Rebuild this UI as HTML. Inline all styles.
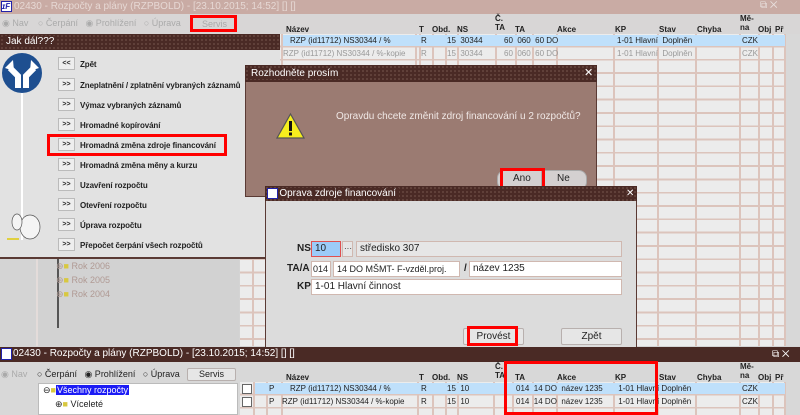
<!DOCTYPE html>
<html><head><meta charset="utf-8"><style>
*{margin:0;padding:0;box-sizing:border-box}
body{width:800px;height:415px;overflow:hidden;position:relative;background:#d4d4d4;font-family:"Liberation Sans",sans-serif;font-size:9px;color:#222}
.a{position:absolute}
.tb{background:#4a2a25;color:#fff;font-size:10px;line-height:15px;padding-left:3px;background-image:radial-gradient(#6e4e46 0.7px,transparent 1px);background-size:4px 4px;background-repeat:repeat}
.tt{background:#4a2a25;padding:0 3px}
.btn{border:1px solid #b8b0ae;background:#e6e6e6;text-align:center;border-radius:2px}
.red{border:3px solid #f00}
.inp{position:absolute;height:16px;border:1px solid #d0b8b0;background:#fff;line-height:14px;padding-left:3px;font-size:10px;white-space:nowrap;overflow:hidden}
.lbl{position:absolute;font-weight:bold;font-size:10px}
.mi{position:absolute;left:58px;width:17px;height:13px;border:1px solid #bbb;background:#eee;font-size:7px;font-weight:bold;text-align:center;line-height:11px}
.mt{position:absolute;left:80px;font-weight:bold;font-size:8px;letter-spacing:-0.1px;white-space:nowrap}
.hd{position:absolute;font-weight:bold;font-size:8px}
</style></head><body>
<div class="a" style="left:0;top:0;width:800px;height:14px;background:#c9aba4"></div>
<div class="a" style="left:1px;top:1px;width:11px;height:11px;background:#fff;border:1px solid #22a;color:#22a;font-size:8px;font-weight:bold;line-height:9px;font-style:italic">ɪF</div>
<div class="a" style="left:14px;top:1px;color:#e6d8d4;font-size:10px">02430 - Rozpočty a plány (RZPBOLD) - [23.10.2015; 14:52] [] []</div>
<div class="a" style="left:760px;top:0;color:#e9e0de;font-size:10px">⧉ ✕</div>
<div class="a" style="left:0;top:14px;width:800px;height:20px;background:#d8d6d6"></div>
<div class="a" style="left:2px;top:18px;color:#aaa;font-size:9px">◉ Nav</div>
<div class="a" style="left:38px;top:18px;color:#aaa;font-size:9px">○ Čerpání &nbsp; ◉ Prohlížení &nbsp; ○ Úprava</div>
<div class="a red" style="left:190px;top:15px;width:47px;height:17px"></div>
<div class="a" style="left:202px;top:19px;color:#aaa;font-size:9px">Servis</div>
<div class="hd" style="left:286px;top:25px">Název</div>
<div class="hd" style="left:419px;top:25px">T</div>
<div class="hd" style="left:432px;top:25px">Obd.</div>
<div class="hd" style="left:457px;top:25px">NS</div>
<div class="hd" style="left:495px;top:14px">Č.<br>TA</div>
<div class="hd" style="left:515px;top:25px">TA</div>
<div class="hd" style="left:557px;top:25px">Akce</div>
<div class="hd" style="left:615px;top:25px">KP</div>
<div class="hd" style="left:659px;top:25px">Stav</div>
<div class="hd" style="left:697px;top:25px">Chyba</div>
<div class="hd" style="left:740px;top:14px">Mě-<br>na</div>
<div class="hd" style="left:758px;top:25px">Obj</div>
<div class="hd" style="left:775px;top:25px">Př</div>
<div class="a" style="left:240px;top:34px;width:546px;height:312px;background:
repeating-linear-gradient(to bottom,transparent 0 11.5px,#dcc4bc 11.5px 13.3px),
linear-gradient(#dcc4bc,#dcc4bc) 12px 0/2px 100% no-repeat,
linear-gradient(#dcc4bc,#dcc4bc) 25px 0/2px 100% no-repeat,
linear-gradient(#dcc4bc,#dcc4bc) 41px 0/2px 100% no-repeat,
linear-gradient(#dcc4bc,#dcc4bc) 175px 0/2px 100% no-repeat,
linear-gradient(#dcc4bc,#dcc4bc) 179px 0/2px 100% no-repeat,
linear-gradient(#dcc4bc,#dcc4bc) 192px 0/2px 100% no-repeat,
linear-gradient(#dcc4bc,#dcc4bc) 205px 0/2px 100% no-repeat,
linear-gradient(#dcc4bc,#dcc4bc) 217px 0/2px 100% no-repeat,
linear-gradient(#dcc4bc,#dcc4bc) 255px 0/2px 100% no-repeat,
linear-gradient(#dcc4bc,#dcc4bc) 275px 0/2px 100% no-repeat,
linear-gradient(#dcc4bc,#dcc4bc) 292px 0/2px 100% no-repeat,
linear-gradient(#dcc4bc,#dcc4bc) 316px 0/2px 100% no-repeat,
linear-gradient(#dcc4bc,#dcc4bc) 373px 0/2px 100% no-repeat,
linear-gradient(#dcc4bc,#dcc4bc) 417px 0/2px 100% no-repeat,
linear-gradient(#dcc4bc,#dcc4bc) 455px 0/2px 100% no-repeat,
linear-gradient(#dcc4bc,#dcc4bc) 499px 0/2px 100% no-repeat,
linear-gradient(#dcc4bc,#dcc4bc) 518px 0/2px 100% no-repeat,
linear-gradient(#dcc4bc,#dcc4bc) 532px 0/2px 100% no-repeat,
linear-gradient(#dcc4bc,#dcc4bc) 544px 0/2px 100% no-repeat,
#ececec"></div>
<div class="a" style="left:283px;top:35px;width:502px;height:11px;background:#bfe0fb"></div>
<div class="a" style="left:290px;top:36px;font-size:8px">RZP (id11712) NS30344 / %</div>
<div class="a" style="left:283px;top:49px;font-size:8px;color:#999">RZP (id11712) NS30344 / %-kopie</div>
<div class="a" style="left:421px;top:36px;font-size:8px">R</div><div class="a" style="left:421px;top:49px;font-size:8px;color:#999">R</div>
<div class="a" style="left:447px;top:36px;font-size:8px">15 &nbsp;30344</div><div class="a" style="left:447px;top:49px;font-size:8px;color:#999">15 &nbsp;30344</div>
<div class="a" style="left:504px;top:36px;font-size:8px">60 &nbsp;060 &nbsp;60 DO</div><div class="a" style="left:504px;top:49px;font-size:8px;color:#999">60 &nbsp;060 &nbsp;60 DO</div>
<div class="a" style="left:617px;top:36px;font-size:8px">1-01 Hlavní &nbsp;Doplněn</div><div class="a" style="left:617px;top:49px;font-size:8px;color:#999">1-01 Hlavní &nbsp;Doplněn</div>
<div class="a" style="left:742px;top:36px;font-size:8px">CZK</div><div class="a" style="left:742px;top:49px;font-size:8px;color:#999">CZK</div>
<div class="a" style="left:786px;top:34px;width:14px;height:312px;background:#d8d8d8"></div>
<div class="a" style="left:36px;top:258px;width:203px;height:88px;background:#d2d2d2;border-left:2px solid #e4dcda"></div>
<div class="a" style="left:57px;top:258px;width:2px;height:70px;background:#555"></div>
<div class="a" style="left:56px;top:261px;color:#b09a94;font-size:9px">⊕<span style="color:#d8c840">■</span> Rok 2006</div>
<div class="a" style="left:56px;top:275px;color:#b09a94;font-size:9px">⊕<span style="color:#d8c840">■</span> Rok 2005</div>
<div class="a" style="left:56px;top:289px;color:#b09a94;font-size:9px">⊕<span style="color:#d8c840">■</span> Rok 2004</div>

<div class="a" style="left:0;top:34px;width:280px;height:225px;background:#e2e2e2;border-bottom:2px solid #5a3a34"></div>
<div class="a tb" style="left:0;top:34px;width:280px;height:16px"><span class="tt">Jak dál???</span></div>
<svg class="a" style="left:0;top:52px" width="46" height="200" viewBox="0 0 46 200">
<rect x="21" y="38" width="2" height="150" fill="#fff"/>
<circle cx="22" cy="21" r="20" fill="#1e4f90"/>
<path d="M18 36 V24 L10 16 M26 36 V24 L34 16" stroke="#fff" stroke-width="6" fill="none"/>
<path d="M5 16 L13 8 L14 19Z M39 16 L31 8 L30 19Z" fill="#fff"/>
<ellipse cx="30" cy="175" rx="10" ry="12" fill="#f4f4f4" stroke="#555" stroke-width=".7"/>
<ellipse cx="17" cy="170" rx="5" ry="8" fill="#f4f4f4" stroke="#555" stroke-width=".7"/>
<rect x="7" y="186" width="12" height="2" fill="#e0d040"/>
</svg>
<div class="mi" style="top:57px">&lt;&lt;</div><div class="mt" style="top:60px">Zpět</div>
<div class="mi" style="top:78px">&gt;&gt;</div><div class="mt" style="top:81px">Zneplatnění / zplatnění vybraných záznamů</div>
<div class="mi" style="top:98px">&gt;&gt;</div><div class="mt" style="top:101px">Výmaz vybraných záznamů</div>
<div class="mi" style="top:118px">&gt;&gt;</div><div class="mt" style="top:121px">Hromadné kopírování</div>
<div class="mi" style="top:138px">&gt;&gt;</div><div class="mt" style="top:141px">Hromadná změna zdroje financování</div>
<div class="a red" style="left:47px;top:134px;width:180px;height:22px"></div>
<div class="mi" style="top:158px">&gt;&gt;</div><div class="mt" style="top:161px">Hromadná změna měny a kurzu</div>
<div class="mi" style="top:178px">&gt;&gt;</div><div class="mt" style="top:181px">Uzavření rozpočtu</div>
<div class="mi" style="top:198px">&gt;&gt;</div><div class="mt" style="top:201px">Otevření rozpočtu</div>
<div class="mi" style="top:218px">&gt;&gt;</div><div class="mt" style="top:221px">Úprava rozpočtu</div>
<div class="mi" style="top:238px">&gt;&gt;</div><div class="mt" style="top:241px">Přepočet čerpání všech rozpočtů</div>

<div class="a" style="left:245px;top:65px;width:352px;height:132px;background:#9b7b72;border:1px solid #5a3a34"></div>
<div class="a tb" style="left:245px;top:65px;width:352px;height:17px;line-height:17px"><span class="tt">Rozhodněte prosím</span></div>
<div class="a" style="left:584px;top:65px;color:#fff;font-size:11px;line-height:17px">✕</div>
<svg class="a" style="left:275px;top:112px" width="31" height="28"><path d="M15.5 2 L29 26 H2Z" fill="#f6ee1e" stroke="#555" stroke-width="1.2"/><rect x="14" y="9" width="3" height="10" fill="#111"/><rect x="14" y="20.5" width="3" height="3" fill="#111"/></svg>
<div class="a" style="left:336px;top:111px;color:#f0e8e6;font-size:10px">Opravdu chcete změnit zdroj financování u 2 rozpočtů?</div>
<div class="a" style="left:497px;top:170px;width:90px;height:20px;background:#d4d0d0;border-radius:8px;border:1px solid #aaa"></div>
<div class="a" style="left:541px;top:170px;width:1px;height:20px;background:#aaa"></div>
<div class="a red" style="left:500px;top:168px;width:45px;height:22px"></div>
<div class="a" style="left:513px;top:173px;font-size:10px">Ano</div>
<div class="a" style="left:557px;top:173px;font-size:10px">Ne</div>

<div class="a" style="left:265px;top:186px;width:372px;height:162px;background:#dcdcdc;border:1px solid #5a3a34"></div>
<div class="a tb" style="left:265px;top:186px;width:372px;height:15px"><span class="tt">&nbsp;&nbsp;&nbsp;Oprava zdroje financování</span></div>
<div class="a" style="left:267px;top:188px;width:11px;height:11px;background:#fff;border:1px solid #22a"></div>
<div class="a" style="left:626px;top:186px;color:#fff;font-size:10px;line-height:15px">✕</div>
<div class="lbl" style="left:297px;top:243px">NS</div>
<div class="inp" style="left:311px;top:241px;width:30px;background:#9ccbf8;border-color:#e05050">10</div>
<div class="inp" style="left:342px;top:241px;width:11px;background:#e6e6e6;font-size:8px;padding-left:1px">···</div>
<div class="inp" style="left:356px;top:241px;width:266px;background:#e6e6e6">středisko 307</div>
<div class="lbl" style="left:287px;top:263px">TA/A</div>
<div class="inp" style="left:311px;top:261px;width:20px;font-size:9px;padding-left:1px">014</div>
<div class="inp" style="left:333px;top:261px;width:127px;font-size:9px">14 DO MŠMT- F-vzděl.proj.</div>
<div class="a" style="left:464px;top:263px;font-size:10px;font-weight:bold">/</div>
<div class="inp" style="left:469px;top:261px;width:153px">název 1235</div>
<div class="lbl" style="left:297px;top:281px">KP</div>
<div class="inp" style="left:311px;top:279px;width:311px">1-01 Hlavní činnost</div>
<div class="a btn" style="left:463px;top:328px;width:61px;height:17px;font-size:10px;line-height:15px">Provést</div>
<div class="a red" style="left:467px;top:326px;width:51px;height:20px"></div>
<div class="a btn" style="left:561px;top:328px;width:61px;height:17px;font-size:10px;line-height:15px">Zpět</div>

<div class="a" style="left:0;top:347px;width:800px;height:68px;background:#d8d8d8"></div>
<div class="a" style="left:0;top:347px;width:800px;height:15px;background:#4a2a25"></div>
<div class="a" style="left:1px;top:348px;width:11px;height:12px;background:#fff;border:1px solid #22a"></div>
<div class="a" style="left:13px;top:348px;color:#fff;font-size:10px">02430 - Rozpočty a plány (RZPBOLD) - [23.10.2015; 14:52] [] []</div>
<div class="a" style="left:772px;top:347px;color:#fff;font-size:10px;line-height:15px">⧉ ✕</div>
<div class="a" style="left:1px;top:369px;color:#aaa;font-size:9px">◉ Nav</div>
<div class="a" style="left:37px;top:369px;font-size:9px">○ Čerpání &nbsp; ◉ Prohlížení &nbsp; ○ Úprava</div>
<div class="a btn" style="left:187px;top:368px;width:49px;height:13px;font-size:9px;line-height:11px">Servis</div>
<div class="a" style="left:38px;top:383px;width:200px;height:32px;background:#fff;border:1px solid #bbb"></div>
<div class="a" style="left:43px;top:385px;font-size:9px">⊖<span style="color:#d8c840">■</span><span style="background:#1b1bf5;color:#fff;padding:0 1px">Všechny rozpočty</span></div>
<div class="a" style="left:55px;top:399px;font-size:9px">⊕<span style="color:#d8c840">■</span> Víceleté</div>
<div class="hd" style="left:286px;top:373px">Název</div>
<div class="hd" style="left:419px;top:373px">T</div>
<div class="hd" style="left:432px;top:373px">Obd.</div>
<div class="hd" style="left:457px;top:373px">NS</div>
<div class="hd" style="left:495px;top:362px">Č.<br>TA</div>
<div class="hd" style="left:515px;top:373px">TA</div>
<div class="hd" style="left:557px;top:373px">Akce</div>
<div class="hd" style="left:615px;top:373px">KP</div>
<div class="hd" style="left:659px;top:373px">Stav</div>
<div class="hd" style="left:697px;top:373px">Chyba</div>
<div class="hd" style="left:740px;top:362px">Mě-<br>na</div>
<div class="hd" style="left:758px;top:373px">Obj</div>
<div class="hd" style="left:775px;top:373px">Př</div>
<div class="a" style="left:240px;top:382px;width:546px;height:33px;background:
repeating-linear-gradient(to bottom,transparent 0 11.5px,#dcc4bc 11.5px 13.3px),
linear-gradient(#dcc4bc,#dcc4bc) 13px 0/2px 100% no-repeat,
linear-gradient(#dcc4bc,#dcc4bc) 26px 0/2px 100% no-repeat,
linear-gradient(#dcc4bc,#dcc4bc) 41px 0/2px 100% no-repeat,
linear-gradient(#dcc4bc,#dcc4bc) 177px 0/2px 100% no-repeat,
linear-gradient(#dcc4bc,#dcc4bc) 192px 0/2px 100% no-repeat,
linear-gradient(#dcc4bc,#dcc4bc) 205px 0/2px 100% no-repeat,
linear-gradient(#dcc4bc,#dcc4bc) 217px 0/2px 100% no-repeat,
linear-gradient(#dcc4bc,#dcc4bc) 253px 0/2px 100% no-repeat,
linear-gradient(#dcc4bc,#dcc4bc) 272px 0/2px 100% no-repeat,
linear-gradient(#dcc4bc,#dcc4bc) 292px 0/2px 100% no-repeat,
linear-gradient(#dcc4bc,#dcc4bc) 316px 0/2px 100% no-repeat,
linear-gradient(#dcc4bc,#dcc4bc) 373px 0/2px 100% no-repeat,
linear-gradient(#dcc4bc,#dcc4bc) 417px 0/2px 100% no-repeat,
linear-gradient(#dcc4bc,#dcc4bc) 455px 0/2px 100% no-repeat,
linear-gradient(#dcc4bc,#dcc4bc) 499px 0/2px 100% no-repeat,
linear-gradient(#dcc4bc,#dcc4bc) 518px 0/2px 100% no-repeat,
linear-gradient(#dcc4bc,#dcc4bc) 532px 0/2px 100% no-repeat,
linear-gradient(#dcc4bc,#dcc4bc) 544px 0/2px 100% no-repeat,
#ececec"></div>
<div class="a" style="left:255px;top:383px;width:530px;height:11px;background:#bfe0fb"></div>
<div class="a" style="left:242px;top:384px;width:10px;height:10px;background:#fff;border:1px solid #666"></div>
<div class="a" style="left:242px;top:397px;width:10px;height:10px;background:#fff;border:1px solid #666"></div>
<div class="a" style="left:269px;top:384px;font-size:8px">P</div><div class="a" style="left:269px;top:397px;font-size:8px">P</div>
<div class="a" style="left:290px;top:384px;font-size:8px">RZP (id11712) NS30344 / %</div>
<div class="a" style="left:282px;top:397px;font-size:8px">RZP (id11712) NS30344 / %-kopie</div>
<div class="a" style="left:421px;top:384px;font-size:8px">R</div><div class="a" style="left:421px;top:397px;font-size:8px">R</div>
<div class="a" style="left:447px;top:384px;font-size:8px">15 &nbsp;10</div><div class="a" style="left:447px;top:397px;font-size:8px">15 &nbsp;10</div>
<div class="a" style="left:516px;top:384px;font-size:8px">014 &nbsp;14 DO &nbsp;název 1235 &nbsp;&nbsp;&nbsp;&nbsp;&nbsp;&nbsp;1-01 Hlavní Doplněn</div>
<div class="a" style="left:516px;top:397px;font-size:8px">014 &nbsp;14 DO &nbsp;název 1235 &nbsp;&nbsp;&nbsp;&nbsp;&nbsp;&nbsp;1-01 Hlavní Doplněn</div>
<div class="a" style="left:742px;top:384px;font-size:8px">CZK</div><div class="a" style="left:742px;top:397px;font-size:8px">CZK</div>
<div class="a red" style="left:504px;top:361px;width:154px;height:54px"></div>
<div class="a" style="left:786px;top:382px;width:14px;height:33px;background:#d8d8d8"></div>
</body></html>
